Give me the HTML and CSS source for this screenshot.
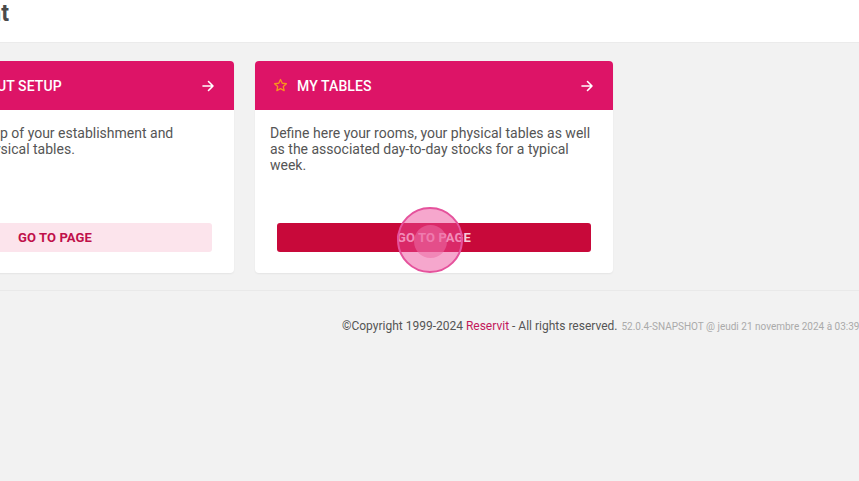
FILE: index.html
```html
<!DOCTYPE html>
<html lang="en">
  <head>
    <meta charset="UTF-8" />
    <meta name="viewport" content="width=device-width, initial-scale=1.0" />
    <title>Restaurant - Reservit</title>
    <link rel="stylesheet" href="styles.css">
  </head>
  <body>
    <div class="page">
      <header class="top-bar">
        <h1 class="page-title">Restaurant</h1>
      </header>

      <main class="content">
        <div class="card-row">
          <section class="card">
            <div class="card-head">
              <svg class="star" viewBox="0 0 16 16" width="15" height="15"><path d="M8 1.6l1.9 4 4.4.5-3.3 3 .9 4.4L8 11.3l-3.9 2.2.9-4.4-3.3-3 4.4-.5z" fill="none" stroke="#f7931e" stroke-width="1.4" stroke-linejoin="round"/></svg>
              <span class="card-title">ROOM LAYOUT SETUP</span>
              <svg class="arrow" viewBox="0 0 14 14" width="14" height="14"><path d="M2 7h10M7.5 2.5 12 7l-4.5 4.5" fill="none" stroke="#fff" stroke-width="1.6" stroke-linecap="round" stroke-linejoin="round"/></svg>
            </div>
            <div class="card-body">
              <p>Draw here the map of your establishment and organize your physical tables.</p>
              <a class="btn btn-light" href="#">GO TO PAGE</a>
            </div>
          </section>

          <section class="card">
            <div class="card-head">
              <svg class="star" viewBox="0 0 16 16" width="15" height="15"><path d="M8 1.6l1.9 4 4.4.5-3.3 3 .9 4.4L8 11.3l-3.9 2.2.9-4.4-3.3-3 4.4-.5z" fill="none" stroke="#f7931e" stroke-width="1.4" stroke-linejoin="round"/></svg>
              <span class="card-title">MY TABLES</span>
              <svg class="arrow" viewBox="0 0 14 14" width="14" height="14"><path d="M2 7h10M7.5 2.5 12 7l-4.5 4.5" fill="none" stroke="#fff" stroke-width="1.6" stroke-linecap="round" stroke-linejoin="round"/></svg>
            </div>
            <div class="card-body">
              <p>Define here your rooms, your physical tables as well as the associated day-to-day stocks for a typical week.</p>
              <a class="btn btn-dark" href="#">GO TO PAGE
                <span class="click-mark"><span class="click-core"></span></span>
              </a>
            </div>
          </section>
        </div>

        <footer class="footer">
          <span class="copy">&copy;Copyright 1999-2024 <a href="#">Reservit</a> - All rights reserved.</span>
          <span class="version">52.0.4-SNAPSHOT @ jeudi 21 novembre 2024 à 03:39</span>
        </footer>
      </main>
    </div>
  </body>
</html>
```

FILE: styles.css
```css
/* page de base */
html, body { margin: 0; padding: 0; }
body { font-family: Roboto, "Liberation Sans", Arial, sans-serif; background: #f2f2f2; color: #555; overflow: hidden; width: 859px; height: 481px; }

/* la page est defilee vers la droite */
.page { margin-left: -146px; width: 1200px; }

.top-bar { background: #fff; height: 43px; border-bottom: 1px solid #ebebeb; box-sizing: border-box; }
.page-title { margin: 0; padding: 0 0 0 42px; font-size: 23px; font-weight: 700; color: #4a4a4a; line-height: 27px; }

.content { padding: 18px 0 0 22px; }
.card-row { display: flex; gap: 21px; }

.card { width: 358px; height: 212px; background: #fff; border-radius: 4px; box-shadow: 0 1px 2px rgba(0,0,0,0.06); display: flex; flex-direction: column; }
.card-head { height: 49px; background: #dd1467; border-radius: 4px 4px 0 0; display: flex; align-items: center; padding: 0 19px 0 18px; color: #fff; }
.card-title { font-size: 14px; font-weight: 500; letter-spacing: 0.1px; flex: 1; white-space: nowrap; }
.star { margin-right: 9px; flex: none; }
.arrow { flex: none; }

.card-body { flex: 1; display: flex; flex-direction: column; padding: 15px 22px 21px 15px; }
.card-body p { margin: 0; font-size: 14px; line-height: 16px; color: #555; }

.btn { position: relative; margin-top: auto; margin-left: 7px; height: 29px; border-radius: 3px; display: flex; align-items: center; justify-content: center; font-size: 13px; font-weight: 700; text-decoration: none; letter-spacing: 0.1px; }
.btn-light { background: #fce4ec; color: #c0104a; }
.btn-dark { background: #c8093a; color: #f7cbd9; }

/* marque du clic sur le bouton */
.click-mark { position: absolute; left: 120px; top: -16px; width: 62px; height: 62px; border-radius: 50%; border: 2px solid #e5529c; background: rgba(236, 76, 154, 0.49); display: flex; align-items: center; justify-content: center; }
.click-core { width: 33px; height: 33px; border-radius: 50%; background: rgba(236, 110, 165, 0.55); margin-top: 2px; }

.footer { margin: 17px 0 0 -22px; border-top: 1px solid #e9e9e9; padding: 24px 0 0 488px; white-space: nowrap; }
.copy { font-size: 12px; color: #555; }
.copy a { color: #c2185b; text-decoration: none; }
.version { font-size: 10px; color: #aaa; }
```
